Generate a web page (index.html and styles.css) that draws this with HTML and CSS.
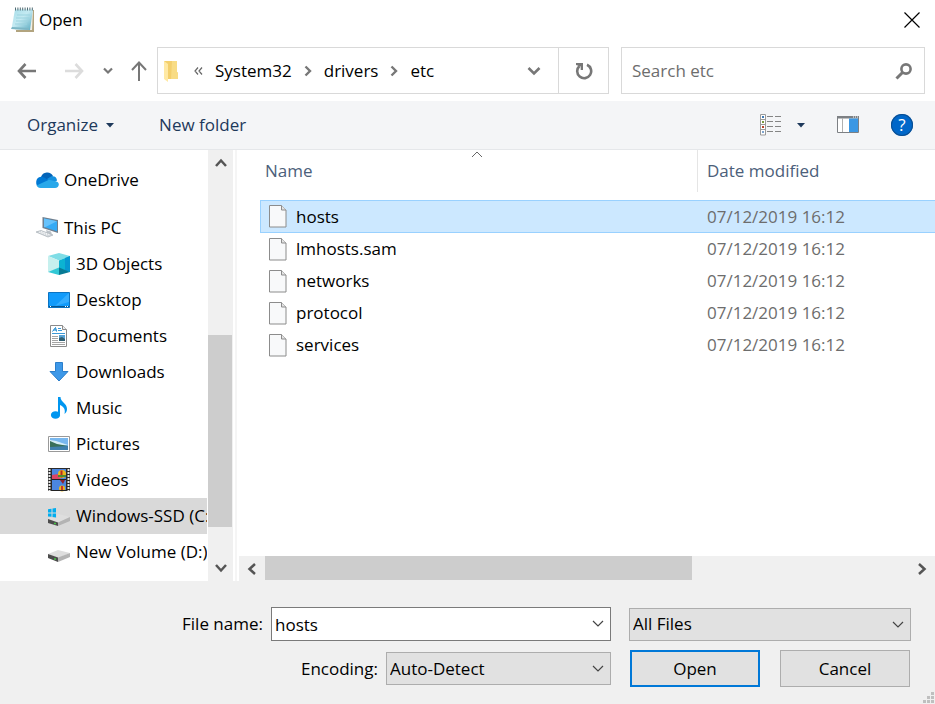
FILE: index.html
```html
<!DOCTYPE html>
<html lang="en">
<head>
    <meta charset="UTF-8">
    <meta name="viewport" content="width=device-width, initial-scale=1.0">
    <title>Open</title>
    <link rel="stylesheet" href="styles.css">
</head>
<body>
    <div class="dialog">
        <header class="titlebar">
            <svg class="app-icon" width="24" height="26" viewBox="0 0 24 26">
                <defs>
                    <linearGradient id="pad" x1="0" y1="0" x2="1" y2="1">
                        <stop offset="0" stop-color="#a5dce8"/>
                        <stop offset="0.45" stop-color="#c4eaf2"/>
                        <stop offset="1" stop-color="#58a9bf"/>
                    </linearGradient>
                </defs>
                <path d="M5 3h18v22H5z" fill="#b2a47f"/>
                <path d="M4 3h18l-1 20H4z" fill="#f1efe6"/>
                <path d="M4 2.500h18L19 23 0.500 22z" fill="url(#pad)"/>
                <path d="M1 20l17 1v2L0 22z" fill="#7db7c6"/>
                <path d="M4 2h18" stroke="#4f6b73" stroke-width="3" stroke-dasharray="1 1.400"/>
                <path d="M6 8h13M5 11h13M5 14h12M4 17h12" stroke="#9bd3df" stroke-width="1"/>
            </svg>
            <h1>Open</h1>
            <button class="close-btn" aria-label="Close">
                <svg width="16" height="16" viewBox="0 0 16 16"><path d="M0.500 0.500l15 15M15.500 0.500l-15 15" stroke="#000" stroke-width="1.200"/></svg>
            </button>
        </header>

        <div class="navbar">
            <div class="nav-buttons">
                <button class="nav-btn" aria-label="Back">
                    <svg width="20" height="18" viewBox="0 0 20 18"><path d="M8.500 2L2 9l6.500 7M2 9h17" fill="none" stroke="#777" stroke-width="2.600"/></svg>
                </button>
                <button class="nav-btn nav-forward" aria-label="Forward" disabled>
                    <svg width="20" height="18" viewBox="0 0 20 18"><path d="M11.500 2L18 9l-6.500 7M18 9H1" fill="none" stroke="#dcdcdc" stroke-width="2.600"/></svg>
                </button>
                <button class="nav-btn nav-recent" aria-label="Recent locations">
                    <svg width="10" height="8" viewBox="0 0 10 8"><path d="M1 1.500l4 4 4-4" fill="none" stroke="#777" stroke-width="2.200"/></svg>
                </button>
                <button class="nav-btn" aria-label="Up">
                    <svg width="16" height="20" viewBox="0 0 16 20"><path d="M1 9l7-7.500L15 9M8 2v18" fill="none" stroke="#777" stroke-width="2"/></svg>
                </button>
            </div>

            <div class="address">
                <svg class="address-folder" width="16" height="22" viewBox="0 0 16 22">
                    <path d="M1 1h13v11l1 1v6H5z" fill="#f3cf6d"/>
                    <path d="M9 1h5v11l1 1v6H8z" fill="#f8dc85"/>
                    <path d="M1 1l4 3v18l-4-3z" fill="#ffe9a4"/>
                </svg>
                <button class="crumb crumb-more" aria-label="Parent folders">
                    <svg width="9" height="8" viewBox="0 0 9 8"><path d="M4 0.500L1 4l3 3.500M8 0.500L5 4l3 3.500" fill="none" stroke="#666" stroke-width="1.200"/></svg>
                </button>
                <button class="crumb">System32</button>
                <svg class="crumb-arrow" width="8" height="12" viewBox="0 0 8 12"><path d="M1.500 1.500L6 6l-4.500 4.500" fill="none" stroke="#777" stroke-width="2.400"/></svg>
                <button class="crumb">drivers</button>
                <svg class="crumb-arrow" width="8" height="12" viewBox="0 0 8 12"><path d="M1.500 1.500L6 6l-4.500 4.500" fill="none" stroke="#777" stroke-width="2.400"/></svg>
                <button class="crumb">etc</button>
                <button class="address-drop" aria-label="Previous locations">
                    <svg width="14" height="10" viewBox="0 0 14 10"><path d="M1.500 2L7 7.500 12.500 2" fill="none" stroke="#777" stroke-width="2.600"/></svg>
                </button>
                <button class="refresh-btn" aria-label="Refresh">
                    <svg width="18" height="18" viewBox="0 0 18 18"><path d="M4.500 4A7 7 0 1 0 12 2.800" fill="none" stroke="#777" stroke-width="2.600"/><path d="M1 1h7v7H5.700V4.500L1 3z" fill="#777"/></svg>
                </button>
            </div>

            <div class="search">
                <input type="search" placeholder="Search etc" aria-label="Search etc">
                <svg width="18" height="18" viewBox="0 0 18 18"><circle cx="11" cy="7" r="4.600" fill="none" stroke="#777" stroke-width="2.600"/><path d="M8 10l-6.500 6.500" stroke="#777" stroke-width="3"/></svg>
            </div>
        </div>

        <div class="toolbar">
            <button class="tool-btn">Organize
                <svg width="8" height="5" viewBox="0 0 8 5"><path d="M0 0h8L4 4.500z" fill="#1e395b"/></svg>
            </button>
            <button class="tool-btn">New folder</button>
            <div class="tool-icons">
                <button class="tool-btn view-btn" aria-label="Change your view">
                    <svg width="22" height="22" viewBox="0 0 22 22">
                        <path d="M0.500 0.500h5v20.500h-5zM0.500 5.500h5M0.500 10.500h5M0.500 15.500h5" fill="#fff" stroke="#9a9a9a"/>
                        <path d="M2 2h2v2H2z" fill="#3e7ab5"/>
                        <path d="M2 7h2v2H2z" fill="#7b9a3f"/>
                        <path d="M2 12h2v2H2z" fill="#b8422a"/>
                        <path d="M2 17h2v2H2z" fill="#7fa5cf"/>
                        <path d="M7 2.500h6M15 2.500h6M7 7.500h6M15 7.500h6M7 12.500h6M15 12.500h6M7 17.500h6M15 17.500h6" stroke="#858585"/>
                    </svg>
                    <svg width="8" height="5" viewBox="0 0 8 5"><path d="M0 0h8L4 4.500z" fill="#1e395b"/></svg>
                </button>
                <button class="tool-btn" aria-label="Preview pane">
                    <svg width="22" height="18" viewBox="0 0 22 18">
                        <path d="M0.500 0.500h21v16h-21z" fill="#fff" stroke="#7d8084"/>
                        <path d="M0 0h22v2.500H0z" fill="#7d8084"/>
                        <path d="M16 1h1M18 1h1M20 1h1" stroke="#fff"/>
                        <path d="M5.500 2v14" stroke="#b0b0b0"/>
                        <path d="M12 2.500h9V16h-9z" fill="#3b97e3"/>
                    </svg>
                </button>
                <button class="help-btn" aria-label="Help">?</button>
            </div>
        </div>

        <main class="content">
            <nav class="sidebar" aria-label="Folders">
                <ul class="tree">
                    <li><a class="tree-item root" href="#">
                        <svg width="24" height="24" viewBox="0 0 24 24">
                            <path d="M6 9a6.500 6.500 0 0 1 12-1l-4 6z" fill="#0364b8"/>
                            <path d="M5 19.500A5.500 5.500 0 0 1 6 8.800c2 0 3 0.700 4 1.300l7 4.400-10 5z" fill="#0078d4"/>
                            <path d="M12 11l4-2.600c4-0.800 6 1.600 6 4.200L17 16z" fill="#1490df"/>
                            <path d="M1.500 17.500L14 11.700l8 2c3.500 2 1.500 6.300-2 6.300H6c-2 0-3.500-0.800-4.500-2.500z" fill="#28a8ea"/>
                        </svg>OneDrive</a></li>
                    <li class="tree-gap"><a class="tree-item root" href="#">
                        <svg width="24" height="24" viewBox="0 0 24 24">
                            <path d="M7.500 1l15.500 3v13L7.500 12z" fill="#6f7f8f"/>
                            <path d="M9 2.500l13 2.800v9.900L9 11z" fill="#35aaf5"/>
                            <path d="M9 2.500l13 2.800-12 6L9 11z" fill="#67c2fb"/>
                            <path d="M11 14l5 1.500 1 3-5-1z" fill="#bcc3c9"/>
                            <path d="M1 16l5-1.500L18 19l-5 2z" fill="#d3d8dc" stroke="#aeb6bd" stroke-width="0.800"/>
                            <path d="M4 16l8 3M6 15.500l9 3.300" stroke="#fff" stroke-width="0.800" stroke-dasharray="1.500 1"/>
                        </svg>This PC</a></li>
                    <li><a class="tree-item" href="#">
                        <svg width="24" height="24" viewBox="0 0 24 24">
                            <path d="M12 1l11 3-11 4.500L1 4z" fill="#7fdde6"/>
                            <path d="M1 4l11 4.500v8L1 20z" fill="#c6f0ee"/>
                            <path d="M23 4L12 8.500v8L23 20z" fill="#0cb3d2"/>
                            <path d="M23 4l-5 2v12.500l5 1.500z" fill="#0797d0"/>
                            <path d="M1 20l11-4.500V23z" fill="#32c8d5"/>
                            <path d="M23 20l-11-4.500V23z" fill="#087a94"/>
                        </svg>3D Objects</a></li>
                    <li><a class="tree-item" href="#">
                        <svg width="24" height="24" viewBox="0 0 24 24">
                            <path d="M1.500 4.500h21v15h-21z" fill="#119bfb" stroke="#0b73c2"/>
                            <path d="M22 5v9L8 18z" fill="#34adff"/>
                            <path d="M2 18.500h20" stroke="#06558f"/>
                            <path d="M3 18.500h1M18 18.500h1M20 18.500h1" stroke="#fff"/>
                        </svg>Desktop</a></li>
                    <li><a class="tree-item" href="#">
                        <svg width="24" height="24" viewBox="0 0 24 24">
                            <path d="M3.500 1.500h12l4 4v17h-16z" fill="#fff" stroke="#8a8a8a"/>
                            <path d="M15.500 1.500v4h4" fill="#eee" stroke="#8a8a8a"/>
                            <path d="M5.500 7.500l3-4 1 4M6.500 6h3" fill="none" stroke="#1686ce"/>
                            <path d="M11 4.500h3M11 6.500h4M5 9.500h13" stroke="#3c9ad8"/>
                            <path d="M5 12.500h6M5 14.500h6M5 16.500h6M5 18.500h13M5 20.500h13" stroke="#a5a5a5"/>
                            <path d="M12 11h6v6h-6z" fill="#56a2d6"/>
                            <path d="M12 14l3-1 3 2v2h-6z" fill="#315e71"/>
                        </svg>Documents</a></li>
                    <li><a class="tree-item" href="#">
                        <svg width="24" height="24" viewBox="0 0 24 24"><path d="M8.500 2.500h7v9h5.500l-9 9.500-9-9.500h5.500z" fill="#3d98e8" stroke="#2b7ecb"/></svg>Downloads</a></li>
                    <li><a class="tree-item" href="#">
                        <svg width="24" height="24" viewBox="0 0 24 24">
                            <ellipse cx="8.500" cy="19" rx="4.600" ry="3.800" fill="#0096f0"/>
                            <path d="M11 1h2.500c0 5 6.500 6 6.500 12 0 2-1 4-2.500 5 1-4 0-7-4.500-9v10h-2z" fill="#0096f0"/>
                        </svg>Music</a></li>
                    <li><a class="tree-item" href="#">
                        <svg width="24" height="24" viewBox="0 0 24 24">
                            <path d="M1.500 4.500h21v15h-21z" fill="#fff" stroke="#999"/>
                            <path d="M3 6h18v12H3z" fill="#78b7ee"/>
                            <path d="M3 8l6 1 12 4H3z" fill="#d4edf6"/>
                            <path d="M3 9l7 3 11 2v2H3z" fill="#39705a"/>
                            <path d="M3 15l18-1v4H3z" fill="#3f80ad"/>
                        </svg>Pictures</a></li>
                    <li><a class="tree-item" href="#">
                        <svg width="24" height="24" viewBox="0 0 24 24">
                            <path d="M1 0h22v23H1z" fill="#2b2b2b"/>
                            <path d="M2.500 1v22M21.500 1v22" stroke="#e8e8e8" stroke-width="2" stroke-dasharray="2 1"/>
                            <path d="M5 1h14v10H5zM5 12h14v10H5z" fill="#4b86df"/>
                            <path d="M5 7l6-1 3 5H5z" fill="#d94464"/>
                            <circle cx="15" cy="6" r="4" fill="#e9b51c"/>
                            <path d="M13.500 2.500h2v7h-2z" fill="#b82720"/>
                            <path d="M11 7h8v2h-8z" fill="#4f8b2f"/>
                            <path d="M13 12h5l-2 4z" fill="#8e2330"/>
                            <circle cx="15" cy="20.500" r="3" fill="#e9b51c"/>
                            <path d="M14 18h2v4h-2z" fill="#c9352b"/>
                            <path d="M5 11.500h14M5 22.500h14" stroke="#222"/>
                        </svg>Videos</a></li>
                    <li><a class="tree-item selected" href="#">
                        <svg width="24" height="24" viewBox="0 0 24 24">
                            <path d="M1 15l10-5 12 3-12 6z" fill="#dedede"/>
                            <path d="M1 15l10 3.500V22L1 19z" fill="#4c4c4c"/>
                            <path d="M11 18.500L23 13v4l-12 5z" fill="#b4b4b4"/>
                            <path d="M7 19.500h2" stroke="#45c645" stroke-width="1.500"/>
                            <path d="M0 4h10v10H0z" fill="#d9d9d9"/>
                            <path d="M1 5.200l3.500-0.500v3.800H1zM5.500 4.500L9 4v4.500H5.500zM1 9.500h3.500v3.300L1 12.400zM5.500 9.500H9v4L5.500 13z" fill="#00adef"/>
                        </svg>Windows-SSD (C:)</a></li>
                    <li><a class="tree-item" href="#">
                        <svg width="24" height="24" viewBox="0 0 24 24">
                            <path d="M1 14l10-4 12 3-12 5z" fill="#dedede"/>
                            <path d="M1 14l10 3.500V22L1 18z" fill="#4c4c4c"/>
                            <path d="M11 17.500L23 13v4l-12 5z" fill="#b4b4b4"/>
                            <path d="M7 19h2" stroke="#45c645" stroke-width="1.500"/>
                        </svg>New Volume (D:)</a></li>
                </ul>
                <div class="scrollbar vertical">
                    <button class="scroll-btn" aria-label="Scroll up"><svg width="12" height="10" viewBox="0 0 12 10"><path d="M1 8l5-5.500L11 8" fill="none" stroke="#555" stroke-width="2.500"/></svg></button>
                    <div class="track-before"></div>
                    <div class="thumb"></div>
                    <div class="track-after"></div>
                    <button class="scroll-btn" aria-label="Scroll down"><svg width="12" height="10" viewBox="0 0 12 10"><path d="M1 2l5 5.500L11 2" fill="none" stroke="#555" stroke-width="2.500"/></svg></button>
                </div>
            </nav>

            <section class="files">
                <table class="file-table">
                    <thead>
                        <tr>
                            <th class="col-name"><div class="col-head">Name
                                <svg class="sort-arrow" width="12" height="7" viewBox="0 0 12 7"><path d="M1 6l5-5 5 5" fill="none" stroke="#666"/></svg></div></th>
                            <th><div class="col-head divided">Date modified</div></th>
                        </tr>
                    </thead>
                    <tbody>
                        <tr class="selected">
                            <td><span class="file"><svg width="18" height="23" viewBox="0 0 18 23"><use href="#file-icon"/></svg>hosts</span></td>
                            <td class="date">07/12/2019 16:12</td>
                        </tr>
                        <tr>
                            <td><span class="file"><svg width="18" height="23" viewBox="0 0 18 23"><use href="#file-icon"/></svg>lmhosts.sam</span></td>
                            <td class="date">07/12/2019 16:12</td>
                        </tr>
                        <tr>
                            <td><span class="file"><svg width="18" height="23" viewBox="0 0 18 23"><use href="#file-icon"/></svg>networks</span></td>
                            <td class="date">07/12/2019 16:12</td>
                        </tr>
                        <tr>
                            <td><span class="file"><svg width="18" height="23" viewBox="0 0 18 23"><use href="#file-icon"/></svg>protocol</span></td>
                            <td class="date">07/12/2019 16:12</td>
                        </tr>
                        <tr>
                            <td><span class="file"><svg width="18" height="23" viewBox="0 0 18 23"><use href="#file-icon"/></svg>services</span></td>
                            <td class="date">07/12/2019 16:12</td>
                        </tr>
                    </tbody>
                </table>
                <div class="scrollbar horizontal">
                    <button class="scroll-btn" aria-label="Scroll left"><svg width="10" height="12" viewBox="0 0 10 12"><path d="M8 1L2.500 6 8 11" fill="none" stroke="#555" stroke-width="2.500"/></svg></button>
                    <div class="thumb"></div>
                    <div class="track-after"></div>
                    <button class="scroll-btn" aria-label="Scroll right"><svg width="10" height="12" viewBox="0 0 10 12"><path d="M2 1l5.500 5L2 11" fill="none" stroke="#555" stroke-width="2.500"/></svg></button>
                </div>
            </section>
        </main>

        <footer class="footer">
            <div class="footer-row">
                <label class="name-label" for="file-name">File name:</label>
                <div class="combo combo-name">
                    <input type="text" id="file-name" value="hosts">
                    <svg class="combo-arrow" width="12" height="7" viewBox="0 0 12 7"><path d="M1 1l5 5 5-5" fill="none" stroke="#444" stroke-width="1.200"/></svg>
                </div>
                <div class="combo combo-type">
                    <select aria-label="File type"><option>All Files</option></select>
                    <svg class="combo-arrow" width="12" height="7" viewBox="0 0 12 7"><path d="M1 1l5 5 5-5" fill="none" stroke="#444" stroke-width="1.200"/></svg>
                </div>
            </div>
            <div class="footer-row">
                <label class="encoding-label" for="encoding">Encoding:</label>
                <div class="combo combo-encoding">
                    <select id="encoding"><option>Auto-Detect</option></select>
                    <svg class="combo-arrow" width="12" height="7" viewBox="0 0 12 7"><path d="M1 1l5 5 5-5" fill="none" stroke="#444" stroke-width="1.200"/></svg>
                </div>
                <div class="actions">
                    <button class="btn btn-default">Open</button>
                    <button class="btn">Cancel</button>
                </div>
            </div>
            <svg class="grip" width="12" height="12" viewBox="0 0 12 12"><path d="M8 0h3v3H8zM4 4h3v3H4zM8 4h3v3H8zM0 8h3v3H0zM4 8h3v3H4zM8 8h3v3H8z" fill="#bfbfbf"/></svg>
        </footer>
    </div>

    <!-- shared icon for files without a known type -->
    <svg class="symbols" width="0" height="0">
        <symbol id="file-icon" viewBox="0 0 18 23">
            <path d="M0.500 0.500h12l4.500 4.500v17H0.500z" fill="#f8f9fa" stroke="#8c8c8c"/>
            <path d="M12.500 0.500V5H17" fill="#e3e3e3" stroke="#8c8c8c"/>
        </symbol>
    </svg>
</body>
</html>
```
FILE: styles.css
```css
* {
    box-sizing: border-box;
}
body {
    margin: 0;
    font-family: "Open Sans", "Noto Sans", sans-serif;
    font-size: 17px;
    line-height: 24px;
    color: #000000;
    background-color: #ffffff;
}
button, input, select {
    font: inherit;
    color: inherit;
}
button {
    padding: 0;
    border: none;
    background: none;
}
svg {
    display: block;
    flex: none;
}
.symbols {
    position: absolute;
}
.dialog {
    display: flex;
    flex-direction: column;
    min-height: 100vh;
}

/* title bar */
.titlebar {
    display: flex;
    align-items: center;
    gap: 4px;
    height: 40px;
    padding: 0 15px 0 11px;
}
.titlebar h1 {
    margin: 0;
    font-size: 17px;
    font-weight: normal;
}
.close-btn {
    margin-left: auto;
}

/* navigation */
.navbar {
    display: flex;
    align-items: center;
    padding: 7px 10px 7px 17px;
}
.nav-buttons {
    display: flex;
    align-items: center;
    width: 140px;
}
.nav-forward {
    margin-left: 27px;
}
.nav-recent {
    margin: 0 18px 0 19px;
}
.address {
    display: flex;
    flex: 1;
    align-items: center;
    height: 47px;
    padding-left: 5px;
    border: 1px solid #d9d9d9;
}
.crumb-more {
    margin: 0 12px 0 15px;
}
.crumb-arrow {
    margin: 0 12px;
}
.address-drop {
    margin: 0 17px 0 auto;
}
.refresh-btn {
    display: flex;
    align-items: center;
    justify-content: center;
    align-self: stretch;
    width: 50px;
    border-left: 1px solid #d9d9d9;
}
.search {
    display: flex;
    align-items: center;
    width: 304px;
    height: 47px;
    margin-left: 12px;
    padding: 0 11px 0 10px;
    border: 1px solid #d9d9d9;
}
.search input {
    flex: 1;
    min-width: 0;
    padding: 0;
    border: none;
    outline: none;
    background: none;
}
.search input::placeholder {
    color: #6d6d6d;
}

/* toolbar */
.toolbar {
    display: flex;
    align-items: center;
    gap: 45px;
    height: 49px;
    padding: 0 22px 0 27px;
    background-color: #f4f5f7;
    border-bottom: 1px solid #e5e7ea;
    color: #1e395b;
}
.tool-btn {
    display: flex;
    align-items: center;
    gap: 8px;
}
.tool-icons {
    display: flex;
    align-items: center;
    gap: 32px;
    margin-left: auto;
}
.view-btn {
    gap: 15px;
}
.help-btn {
    width: 22px;
    height: 22px;
    border-radius: 50%;
    background-color: #0067c9;
    box-shadow: inset 0 0 0 1px #0b4f92;
    color: #ffffff;
    line-height: 22px;
}

/* folder tree */
.content {
    display: flex;
    flex: 1;
}
.sidebar {
    display: flex;
    flex: none;
    width: 237px;
    border-right: 2px solid #f5f5f5;
}
.tree {
    flex: 1;
    min-width: 0;
    margin: 0;
    padding: 12px 1px 10px 0;
    list-style: none;
    overflow: hidden;
}
.tree-gap {
    margin-top: 12px;
}
.tree-item {
    display: flex;
    align-items: center;
    gap: 5px;
    height: 36px;
    padding-left: 47px;
    color: inherit;
    text-decoration: none;
    white-space: nowrap;
    overflow: hidden;
}
.tree-item.root {
    padding-left: 35px;
}
.tree-item.selected {
    background-color: #d9d9d9;
}

/* scroll bars */
.scrollbar {
    display: flex;
    background-color: #f0f0f0;
}
.scrollbar.vertical {
    flex-direction: column;
    flex: none;
    width: 25px;
    margin-right: 2px;
}
.scroll-btn {
    display: flex;
    align-items: center;
    justify-content: center;
    flex: 0 0 26px;
}
.thumb {
    background-color: #cdcdcd;
}
.vertical .track-before {
    flex: 159;
}
.vertical .thumb {
    flex: 192;
    margin-right: 1px;
}
.vertical .track-after {
    flex: 28;
}
.horizontal {
    height: 25px;
    margin-left: 2px;
}
.horizontal .thumb {
    flex: 427;
    margin-bottom: 1px;
}
.horizontal .track-after {
    flex: 217;
}

/* file list */
.files {
    display: flex;
    flex: 1;
    flex-direction: column;
    justify-content: space-between;
    min-width: 0;
}
.file-table {
    margin-left: 23px;
    border-spacing: 0;
    table-layout: fixed;
}
.file-table th {
    padding: 0 0 8px;
    font-weight: normal;
    text-align: left;
    color: #4c607a;
}
.col-name {
    width: 437px;
}
.col-head {
    position: relative;
    height: 42px;
    padding-left: 5px;
    line-height: 42px;
}
.col-head.divided {
    padding-left: 9px;
    border-left: 1px solid #e5e5e5;
}
.sort-arrow {
    position: absolute;
    top: 1px;
    left: 50%;
    margin-left: -8px;
}
.file-table td {
    height: 32px;
    padding: 0;
}
.file {
    display: flex;
    align-items: center;
    gap: 9px;
    padding-left: 9px;
}
.file-table .date {
    padding-left: 10px;
    color: #6d6d6d;
}
.file-table .selected td {
    height: 33px;
    background-color: #cce8ff;
    border: 1px solid #99d1ff;
    border-width: 1px 0;
}
.file-table .selected td:first-child {
    border-left-width: 1px;
}
.selected .file {
    padding-left: 8px;
}

/* file name, encoding and buttons */
.footer {
    position: relative;
    padding: 26px 24px 17px 0;
    background-color: #f0f0f0;
}
.footer-row {
    display: flex;
    align-items: center;
    justify-content: flex-end;
}
.footer-row + .footer-row {
    margin-top: 9px;
}
.name-label {
    flex: 0 0 271px;
    padding-right: 8px;
    text-align: right;
}
.encoding-label {
    padding-right: 8px;
}
.combo {
    position: relative;
}
.combo-name {
    flex: 1;
}
.combo-type {
    width: 282px;
    margin-left: 18px;
}
.combo-encoding {
    width: 225px;
}
.combo input,
.combo select {
    display: block;
    width: 100%;
    height: 33px;
    padding: 0 28px 0 3px;
    border: 1px solid #adadad;
    border-radius: 0;
    background-color: #e1e1e1;
    appearance: none;
}
.combo input {
    height: 34px;
    border-color: #7a7a7a;
    background-color: #ffffff;
}
.combo-arrow {
    position: absolute;
    top: 13px;
    right: 7px;
    pointer-events: none;
}
.actions {
    display: flex;
    gap: 20px;
    padding: 0 1px 0 19px;
}
.btn {
    width: 130px;
    height: 37px;
    border: 1px solid #adadad;
    background-color: #e1e1e1;
}
.btn-default {
    border: 2px solid #0078d7;
}
.grip {
    position: absolute;
    right: 0;
    bottom: 0;
}
```
